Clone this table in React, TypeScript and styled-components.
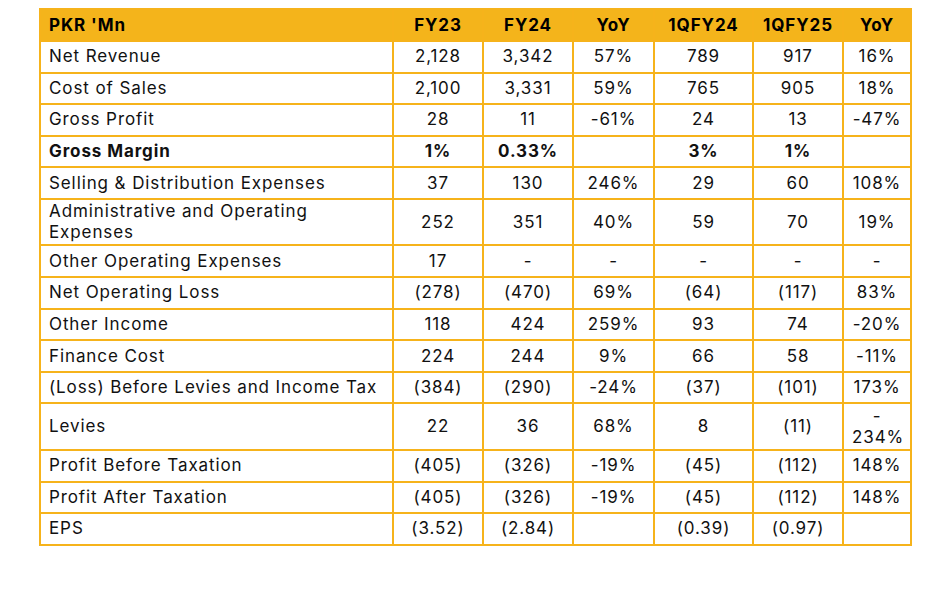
import React from "react";
import styled, { createGlobalStyle } from "styled-components";

const GlobalStyle = createGlobalStyle`
  html, body { margin: 0; padding: 0; background: #ffffff; }
  body { font-family: "Inter", "Liberation Sans", sans-serif; }
`;

const Page = styled.div`
  padding: 8px 0 0 39px;
  width: 930px;
  height: 596px;
  box-sizing: border-box;
  background: #ffffff;
`;

const Table = styled.table`
  border-collapse: collapse;
  table-layout: fixed;
  width: 871px;
  font-family: "Inter", "Liberation Sans", sans-serif;
  font-size: 17px;
  letter-spacing: 0.9px;
  color: #111111;
`;

const HeadRow = styled.tr`
  background: #f4b41b;
  height: 32px;
`;

const Row = styled.tr<{ $tall?: boolean }>`
  height: ${(p) => (p.$tall ? "46.5px" : "31.6px")};
`;

const Th = styled.th<{ $left?: boolean }>`
  border: 2px solid #f6b31b;
  padding: 0 8px;
  font-weight: 700;
  text-align: ${(p) => (p.$left ? "left" : "center")};
  line-height: 21px;
  color: #000000;
`;

const Td = styled.td<{ $left?: boolean; $bold?: boolean }>`
  border: 2px solid #f6b31b;
  padding: 0 8px;
  text-align: ${(p) => (p.$left ? "left" : "center")};
  font-weight: ${(p) => (p.$bold ? 700 : 400)};
  line-height: 21px;
  vertical-align: middle;
`;

type Line = {
  label: string;
  values: React.ReactNode[];
  bold?: boolean;
  tall?: boolean;
};

const widths = [353, 90, 90, 81, 99, 90, 68];
const headers = ["FY23", "FY24", "YoY", "1QFY24", "1QFY25", "YoY"];

const lines: Line[] = [
  { label: "Net Revenue", values: ["2,128", "3,342", "57%", "789", "917", "16%"] },
  { label: "Cost of Sales", values: ["2,100", "3,331", "59%", "765", "905", "18%"] },
  { label: "Gross Profit", values: ["28", "11", "-61%", "24", "13", "-47%"] },
  { label: "Gross Margin", values: ["1%", "0.33%", "", "3%", "1%", ""], bold: true },
  { label: "Selling & Distribution Expenses", values: ["37", "130", "246%", "29", "60", "108%"] },
  { label: "Administrative and Operating Expenses", values: ["252", "351", "40%", "59", "70", "19%"], tall: true },
  { label: "Other Operating Expenses", values: ["17", "-", "-", "-", "-", "-"] },
  { label: "Net Operating Loss", values: ["(278)", "(470)", "69%", "(64)", "(117)", "83%"] },
  { label: "Other Income", values: ["118", "424", "259%", "93", "74", "-20%"] },
  { label: "Finance Cost", values: ["224", "244", "9%", "66", "58", "-11%"] },
  { label: "(Loss) Before Levies and Income Tax", values: ["(384)", "(290)", "-24%", "(37)", "(101)", "173%"] },
  {
    label: "Levies",
    values: ["22", "36", "68%", "8", "(11)", <>-<br />234%</>],
    tall: true,
  },
  { label: "Profit Before Taxation", values: ["(405)", "(326)", "-19%", "(45)", "(112)", "148%"] },
  { label: "Profit After Taxation", values: ["(405)", "(326)", "-19%", "(45)", "(112)", "148%"] },
  { label: "EPS", values: ["(3.52)", "(2.84)", "", "(0.39)", "(0.97)", ""] },
];

export default function App() {
  return (
    <>
      <GlobalStyle />
      <Page>
        <Table>
          <colgroup>
            {widths.map((w, i) => (
              <col key={i} style={{ width: `${w}px` }} />
            ))}
          </colgroup>
          <thead>
            <HeadRow>
              <Th $left>PKR 'Mn</Th>
              {headers.map((h, i) => (
                <Th key={i}>{h}</Th>
              ))}
            </HeadRow>
          </thead>
          <tbody>
            {lines.map((l, i) => (
              <Row key={i} $tall={l.tall}>
                <Td $left $bold={l.bold}>
                  {l.label}
                </Td>
                {l.values.map((v, j) => (
                  <Td key={j} $bold={l.bold}>
                    {v}
                  </Td>
                ))}
              </Row>
            ))}
          </tbody>
        </Table>
      </Page>
    </>
  );
}
